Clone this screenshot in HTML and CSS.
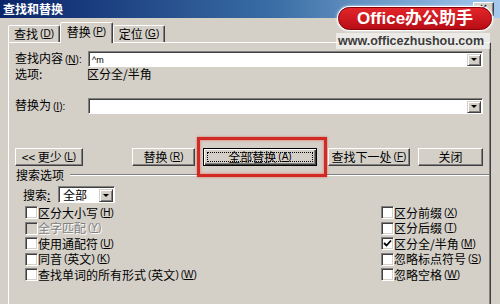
FILE: index.html
```html
<!DOCTYPE html>
<html lang="zh-CN">
<head>
<meta charset="utf-8">
<title>查找和替换</title>
<link rel="stylesheet" href="styles.css">
</head>
<body>
<div class="window">
  <div class="titlebar">
    <span class="title">查找和替换</span>
    <span class="close">×</span>
  </div>
  <div class="tabs">
    <div class="tab">查找<span class="k">(<u>D</u>)</span></div>
    <div class="tab active">替换<span class="k">(<u>P</u>)</span></div>
    <div class="tab">定位<span class="k">(<u>G</u>)</span></div>
  </div>
  <div class="panel">
    <div class="row r-find">
      <span class="lbl">查找内容<span class="k">(<u>N</u>):</span></span>
      <div class="combo"><span class="val">^m</span><span class="drop"><i></i></span></div>
    </div>
    <div class="row r-opt">
      <span class="lbl">选项:</span>
      <span>区分全/半角</span>
    </div>
    <div class="row r-rep">
      <span class="lbl">替换为<span class="k">(<u>I</u>):</span></span>
      <div class="combo"><span class="val"></span><span class="drop"><i></i></span></div>
    </div>
    <div class="buttons">
      <div class="btn b-less">&lt;&lt; 更少<span class="k">(<u>L</u>)</span></div>
      <div class="btn b-rep">替换<span class="k">(<u>R</u>)</span></div>
      <div class="hl"><div class="btn default b-all">全部替换<span class="k">(<u>A</u>)</span></div></div>
      <div class="btn b-next">查找下一处<span class="k">(<u>F</u>)</span></div>
      <div class="btn b-close">关闭</div>
    </div>
    <div class="sep"><span>搜索选项</span><span class="line"></span></div>
    <div class="search">
      <span class="slbl">搜索<u>:</u></span>
      <div class="select"><span>全部</span><span class="drop"><i></i></span></div>
    </div>
    <div class="checks">
      <div class="col">
        <div class="chk"><span class="box"></span>区分大小写<span class="k">(<u>H</u>)</span></div>
        <div class="chk disabled"><span class="box"></span>全字匹配<span class="k">(<u>Y</u>)</span></div>
        <div class="chk"><span class="box"></span>使用通配符<span class="k">(<u>U</u>)</span></div>
        <div class="chk"><span class="box"></span>同音<span class="k">(</span>英文<span class="k p">)</span><span class="k">(<u>K</u>)</span></div>
        <div class="chk"><span class="box"></span>查找单词的所有形式<span class="k">(</span>英文<span class="k p">)</span><span class="k">(<u>W</u>)</span></div>
      </div>
      <div class="col">
        <div class="chk"><span class="box"></span>区分前缀<span class="k">(<u>X</u>)</span></div>
        <div class="chk"><span class="box"></span>区分后缀<span class="k">(<u>T</u>)</span></div>
        <div class="chk"><span class="box"><svg width="9" height="9" viewBox="0 0 9 9"><path d="M1 4 L3.5 6.5 L8 1.5" fill="none" stroke="#000" stroke-width="1.8"/></svg></span>区分全/半角<span class="k">(<u>M</u>)</span></div>
        <div class="chk"><span class="box"></span>忽略标点符号<span class="k">(<u>S</u>)</span></div>
        <div class="chk"><span class="box"></span>忽略空格<span class="k">(<u>W</u>)</span></div>
      </div>
    </div>
  </div>
  <div class="logo">Office办公助手</div>
  <div class="url">www.officezhushou.com</div>
</div>
</body>
</html>
```

FILE: styles.css
```css
* { box-sizing: border-box; }
body {
  margin: 0;
  width: 500px;
  height: 304px;
  overflow: hidden;
  background: #d4d0c8;
  font-family: "Noto Sans CJK SC", "Liberation Sans", sans-serif;
  font-size: 12px;
  color: #000;
}
.window {
  position: relative;
  height: 304px;
}
u { text-decoration: underline; text-underline-offset: 1px; }
.k {
  font-size: 10px;
  font-family: "Liberation Sans", "Noto Sans CJK SC", sans-serif;
  margin-left: 2px;
}
.k.p { margin-left: 0; }

.titlebar {
  height: 18px;
  background: linear-gradient(to right, #0a246a 0%, #3a6ea5 55%, #a6caf0 100%);
  display: flex;
  align-items: center;
  padding-left: 3px;
}
.title {
  color: #fff;
  font-weight: bold;
  font-size: 12px;
  line-height: 14px;
}
.close {
  margin-left: auto;
  margin-right: 6px;
  width: 21px;
  height: 14px;
  background: #d4d0c8;
  border: 1px solid;
  border-color: #fff #404040 #404040 #fff;
  box-shadow: inset -1px -1px #808080;
  font-size: 12px;
  line-height: 11px;
  text-align: center;
  font-family: "Liberation Sans", sans-serif;
  font-weight: bold;
}

.tabs {
  display: flex;
  align-items: flex-end;
  height: 21px;
  margin-top: 4px;
  padding-left: 8px;
  position: relative;
  z-index: 1;
}
.tab {
  width: 52px;
  height: 17px;
  margin-bottom: 1px;
  background: #d4d0c8;
  border: 1px solid;
  border-bottom: none;
  border-color: #fff #404040 transparent #fff;
  box-shadow: inset -1px 0 #808080;
  border-radius: 2px 2px 0 0;
  display: flex;
  align-items: center;
  justify-content: center;
  line-height: 14px;
}
.tab.active {
  width: 53px;
  height: 21px;
  margin-bottom: 0;
  padding-bottom: 3px;
}

.panel {
  margin: -1px 9px 0 8px;
  height: 270px;
  border-top: 1px solid #fff;
  border-left: 1px solid #fff;
  border-right: 1px solid #404040;
  box-shadow: inset -1px 0 #808080;
  padding-left: 6px;
}

.row {
  display: flex;
  align-items: center;
  line-height: 14px;
}
.lbl { width: 73px; flex: none; }
.r-find { margin-top: 8px; height: 16px; }
.r-opt { height: 13px; }
.r-opt .lbl { width: 72px; }
.r-rep { margin-top: 18px; height: 16px; }

.combo {
  width: 395px;
  height: 16px;
  background: #fff;
  border: 1px solid;
  border-color: #808080 #fff #fff #808080;
  box-shadow: inset 1px 1px #404040;
  display: flex;
  align-items: center;
  justify-content: space-between;
  padding: 1px 1px 0 3px;
}
.val {
  font-family: "Liberation Sans", sans-serif;
  font-size: 9px;
  line-height: 10px;
}
.drop {
  width: 14px;
  height: 12px;
  background: #d4d0c8;
  border: 1px solid;
  border-color: #d4d0c8 #404040 #404040 #d4d0c8;
  box-shadow: inset 1px 1px #fff, inset -1px -1px #808080;
  display: flex;
  align-items: center;
  justify-content: center;
}
.drop i {
  width: 0;
  height: 0;
  border-left: 3px solid transparent;
  border-right: 3px solid transparent;
  border-top: 3px solid #000;
}

.buttons {
  display: flex;
  margin-top: 34px;
  height: 18px;
}
.btn {
  height: 18px;
  background: #d4d0c8;
  border: 1px solid;
  border-color: #fff #404040 #404040 #fff;
  box-shadow: inset -1px -1px #808080;
  display: flex;
  align-items: center;
  justify-content: center;
  line-height: 14px;
  white-space: nowrap;
}
.b-less { width: 68px; }
.b-rep { width: 63px; margin-left: 49px; }
.hl { position: relative; margin-left: 8px; }
.hl::after {
  content: "";
  position: absolute;
  left: -6px;
  right: -10px;
  top: -11px;
  bottom: -11px;
  border: 3px solid #d22a22;
  box-shadow: 0 0 2px rgba(210, 42, 34, 0.6), inset 0 0 2px 1px rgba(230, 120, 110, 0.6);
}
.btn.default {
  width: 114px;
  position: relative;
  border-color: #000;
  box-shadow: inset 1px 1px #fff, inset -1px -1px #404040, inset -2px -2px #808080;
}
.btn.default::before {
  content: "";
  position: absolute;
  inset: 3px;
  border: 1px dotted #000;
}
.b-next { width: 82px; margin-left: 11px; }
.b-close { width: 65px; margin-left: 8px; }

.sep {
  display: flex;
  align-items: center;
  margin-top: 2px;
  height: 14px;
  line-height: 14px;
  padding-left: 1px;
}
.sep .line {
  flex: none;
  width: 419px;
  margin-left: 6px;
  height: 2px;
  border-top: 1px solid #808080;
  border-bottom: 1px solid #fff;
}

.search {
  display: flex;
  align-items: center;
  margin-top: 4px;
  height: 17px;
  padding-left: 8px;
  line-height: 14px;
}
.slbl { width: 35px; }
.select {
  width: 57px;
  height: 17px;
  background: #fff;
  border: 1px solid;
  border-color: #808080 #fff #fff #808080;
  box-shadow: inset 1px 1px #404040;
  display: flex;
  align-items: center;
  justify-content: space-between;
  padding: 1px 1px 0 4px;
}
.select .drop { height: 13px; }

.checks {
  display: flex;
  margin-top: 2px;
  padding-left: 10px;
}
.col:first-child { width: 356px; }
.chk {
  display: flex;
  align-items: center;
  height: 15.5px;
  line-height: 14px;
  white-space: nowrap;
}
.box {
  width: 13px;
  height: 13px;
  flex: none;
  background: #fff;
  border: 1px solid;
  border-color: #808080 #fff #fff #808080;
  box-shadow: inset 1px 1px #404040, inset -1px -1px #d4d0c8;
  display: flex;
  align-items: center;
  justify-content: center;
}
.chk.disabled { color: #808080; text-shadow: 1px 1px #fff; }
.chk.disabled .box { background: #d4d0c8; }

.logo {
  position: absolute;
  left: 338px;
  top: 7px;
  width: 154px;
  height: 23px;
  border-radius: 12px;
  background: linear-gradient(#e3262a, #b80d16);
  border: 1px solid #8c0008;
  box-shadow: 0 0 0 1px #fff, 0 0 3px 1px rgba(255, 255, 255, 0.8);
  color: #fff;
  font-family: "Liberation Sans", "Noto Sans CJK SC", sans-serif;
  font-weight: bold;
  font-size: 17px;
  line-height: 21px;
  text-align: center;
}
.url {
  position: absolute;
  left: 336px;
  top: 33px;
  width: 154px;
  height: 16px;
  background: rgba(255, 255, 255, 0.55);
  color: #3c3c3c;
  font-family: "Liberation Sans", sans-serif;
  font-weight: bold;
  font-size: 12.5px;
  line-height: 16px;
  padding-left: 2px;
}
```
